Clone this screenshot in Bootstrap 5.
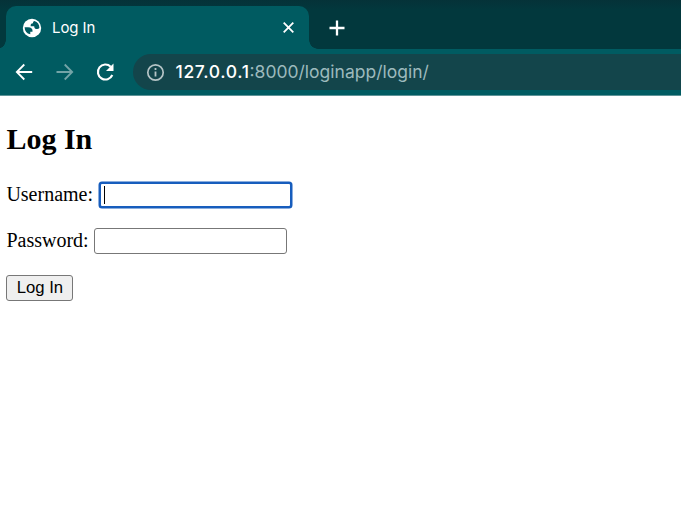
<!DOCTYPE html>
<html lang="en">
<head>
<meta charset="utf-8">
<title>Log In</title>
<link href="https://cdn.jsdelivr.net/npm/bootstrap@5.3.0/dist/css/bootstrap.min.css" rel="stylesheet">
<style>
body{background:#fff;overflow:hidden;color:#000}
.chrome{font-family:Inter,"Liberation Sans",sans-serif;color:#fff;background:#02373c}
.strip{height:49px;padding:6px 0 0 6px;background:linear-gradient(#053238,#02383d 10px)}
.tab{width:303px;height:43px;background:#005b61;border-radius:10px 10px 0 0;padding:0 14px 0 16px;font-size:15px}
.tab::before,.tab::after{content:"";position:absolute;bottom:0;width:9px;height:9px}
.tab::before{left:-9px;background:radial-gradient(circle at 0 0,transparent 8.5px,#005b61 9px)}
.tab::after{right:-9px;background:radial-gradient(circle at 100% 0,transparent 8.5px,#005b61 9px)}
.tab-name{margin-left:10px;letter-spacing:-.1px;padding-top:1px}
.plus{margin:14px 0 0 20px}
.toolbar{height:47px;background:#005b61;border-bottom:1px solid #5d9397;padding-left:14px}
.forward{margin-left:21px}
.reload{margin-left:20px}
.omni{height:36px;background:#13454b;border-radius:18px 0 0 18px;margin-left:18px;padding-left:13px;font-size:17.5px}
.addr{margin-left:10.5px;color:#9dbabd;white-space:nowrap}
.addr span{color:#fff;font-weight:500;letter-spacing:.65px}
.page{font-family:"Liberation Serif",serif;font-size:20px;line-height:23px;padding:25px 6.4px}
.page h2{font-size:30px;line-height:36px;font-weight:700;margin-bottom:25px}
.line{height:26px;margin-bottom:21px}
.line label{margin:-1px 5.6px 0 0}
.line+.line{margin-bottom:21px}
.entry{width:193px;height:26px;border:1px solid #777;border-radius:3px;background:#fff}
.line+.line{margin-top:-1px}
.entry.active{border:2px solid #175dbd;box-shadow:0 0 0 .5px #175dbd;padding:3px}
.caret{width:1px;height:18px;background:#000}
.submit{width:67px;height:26px;border:1px solid #777;border-radius:3px;background:#efefef;font:16.7px "Liberation Sans",Arial,sans-serif;color:#000}
</style>
</head>
<body>
<header class="chrome">
 <div class="strip d-flex align-items-start">
  <div class="tab position-relative d-flex align-items-center">
   <svg width="20" height="20" viewBox="0 0 20 20"><circle cx="10" cy="10" r="9.200" fill="#fff"/><path d="M2.600 9.200H6c3.400 0 4.900 1.600 4.500 4.500H8.300v2.600A7.500 7.500 0 0 1 2.600 9.200zM12.400 3.100A7.400 7.400 0 0 1 17.400 10c-.6.700-1.300 1.100-2.200 1.100-2 0-3-1-3-2.900H8.700c-.3-2 .5-3 2.300-3 0-1.100.5-1.700 1.400-2.100z" fill="#005b61"/></svg>
   <span class="tab-name">Log In</span>
   <svg class="ms-auto" width="13" height="13" viewBox="0 0 13 13" stroke="#fff" stroke-width="1.8"><path d="M1.700 1.700l9.600 9.600M11.300 1.700l-9.600 9.600"/></svg>
  </div>
  <svg class="plus" width="16" height="16" viewBox="0 0 16 16" stroke="#fff" stroke-width="2.300"><path d="M8 .5v15M.5 8h15"/></svg>
 </div>
 <div class="toolbar d-flex align-items-center">
  <svg width="20" height="20" viewBox="0 0 20 20" fill="none" stroke="#fff" stroke-width="1.800"><path d="M18.200 10H3M10.300 2.500L2.800 10l7.500 7.500"/></svg>
  <svg class="forward" width="20" height="20" viewBox="0 0 20 20" fill="none" stroke="#73a4a7" stroke-width="1.800"><path d="M1.500 10H17M9.700 2.500l7.500 7.500-7.500 7.500"/></svg>
  <svg class="reload" width="20" height="20" viewBox="0 0 20 20"><path d="M15.700 4.700A7.500 7.500 0 1 0 17.300 13" fill="none" stroke="#fff" stroke-width="2.100"/><path d="M18.500 1.500v7.500H11z" fill="#fff"/></svg>
  <div class="omni flex-grow-1 d-flex align-items-center">
   <svg width="19" height="19" viewBox="0 0 19 19"><circle cx="9.500" cy="9.500" r="7.700" fill="none" stroke="#b5c4c6" stroke-width="1.700"/><path d="M9.500 8.500v5M9.500 5v2" stroke="#b5c4c6" stroke-width="1.800"/></svg>
   <div class="addr"><span>127.0.0.1</span>:8000/loginapp/login/</div>
  </div>
 </div>
</header>
<main class="page">
 <h2>Log In</h2>
 <div class="line d-flex align-items-center"><label>Username:</label><div class="entry active d-flex align-items-center"><span class="caret"></span></div></div>
 <div class="line d-flex align-items-center"><label>Password:</label><div class="entry"></div></div>
 <button class="submit p-0 d-block">Log In</button>
</main>
<script src="https://cdn.jsdelivr.net/npm/bootstrap@5.3.0/dist/js/bootstrap.bundle.min.js"></script>
</body>
</html>
